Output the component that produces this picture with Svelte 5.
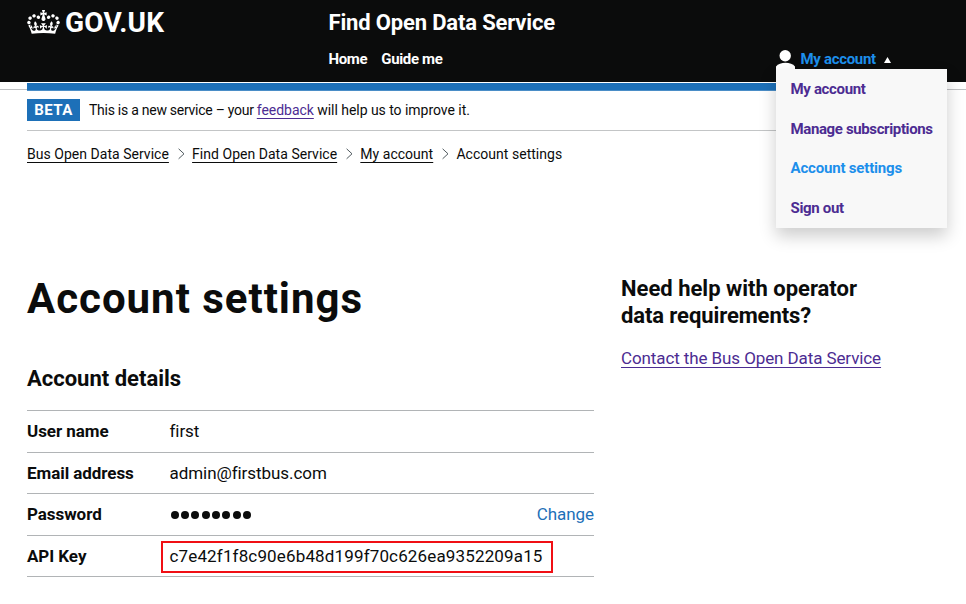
<script>
  const nav = ['Home', 'Guide me'];
  const menu = [
    { label: 'My account', ls: -0.33 },
    { label: 'Manage subscriptions', ls: -0.37 },
    { label: 'Account settings', ls: -0.18, current: true },
    { label: 'Sign out', ls: -0.33 }
  ];
  const breadcrumbs = ['Bus Open Data Service', 'Find Open Data Service', 'My account'];
  const details = [
    { term: 'User name', value: 'first' },
    { term: 'Email address', value: 'admin@firstbus.com' },
    { term: 'Password', password: true, action: 'Change' },
    { term: 'API Key', value: 'c7e42f1f8c90e6b48d199f70c626ea9352209a15', key: true }
  ];
</script>

<div class="page">
  <header>
    <a class="logo" href="#home">
      <svg viewBox="0 0 132 97" width="33" height="24" fill="#fff" fill-rule="evenodd" aria-hidden="true">
        <path d="M25 30.2c3.5 1.5 7.7-.2 9.1-3.7 1.5-3.6-.2-7.8-3.9-9.2-3.6-1.4-7.6.3-9.1 3.9-1.4 3.5.3 7.5 3.9 9zM9 39.5c3.6 1.5 7.8-.2 9.2-3.7 1.5-3.6-.2-7.8-3.9-9.1-3.6-1.5-7.6.2-9.1 3.8-1.4 3.5.3 7.5 3.8 9zM4.4 57.2c3.5 1.5 7.7-.2 9.1-3.8 1.5-3.6-.2-7.7-3.9-9.1-3.5-1.5-7.6.3-9.1 3.8-1.4 3.5.3 7.6 3.9 9.1zm38.3-21.4c3.5 1.5 7.7-.2 9.1-3.8 1.5-3.6-.2-7.7-3.9-9.1-3.6-1.5-7.6.3-9.1 3.8-1.3 3.6.4 7.7 3.9 9.1zm64.4-5.6c-3.6 1.5-7.8-.2-9.1-3.7-1.5-3.6.2-7.8 3.8-9.2 3.6-1.4 7.7.3 9.2 3.9 1.3 3.5-.4 7.5-3.9 9zm15.9 9.3c-3.6 1.5-7.7-.2-9.1-3.7-1.5-3.6.2-7.8 3.7-9.1 3.6-1.5 7.7.2 9.2 3.8 1.5 3.5-.3 7.5-3.8 9zm4.7 17.7c-3.6 1.5-7.8-.2-9.2-3.8-1.5-3.6.2-7.7 3.9-9.1 3.6-1.5 7.7.3 9.2 3.8 1.3 3.5-.4 7.6-3.9 9.1zM89.3 35.8c-3.6 1.5-7.8-.2-9.2-3.8-1.4-3.6.2-7.7 3.9-9.1 3.6-1.5 7.7.3 9.2 3.8 1.4 3.6-.3 7.7-3.9 9.1zM69.7 17.7l8.9 4.7V9.3l-8.9 2.8c-.2-.3-.5-.6-.9-.9L72.4 0H59.6l3.5 11.2c-.3.3-.6.5-.9.9l-8.8-2.8v13.1l8.8-4.7c.3.3.6.7.9.9l-5 15.4v.1c-.2.8-.4 1.6-.4 2.4 0 4.1 3.1 7.5 7 8.1h.2c.3 0 .7.1 1 .1.4 0 .7 0 1-.1h.2c4-.6 7.1-4.1 7.1-8.1 0-.8-.1-1.7-.4-2.4V34l-5.1-15.4c.4-.2.7-.6 1-.9zM66 92.8c16.9 0 32.8 1.1 47.1 3.2 4-16.9 8.9-26.7 14-33.5l-9.6-3.4c1 4.9 1.1 7.2 0 10.2-1.5-1.4-3-4.3-4.2-8.7L108.6 76c2.8-2 5-3.2 7.5-3.3-4.4 9.4-10 11.9-13.6 11.2-4.3-.8-6.3-4.6-5.6-7.9 1-4.7 5.7-5.9 8-.5 4.3-8.7-3-11.4-7.6-8.8 7.1-7.2 7.9-13.5 2.1-21.1-8 6.1-8.1 12.3-4.5 20.8-4.7-5.4-12.1-2.5-9.5 6.2 3.4-5.2 7.9-2 7.2 3.1-.6 4.3-6.4 7.8-13.5 7.2-10.3-.9-10.9-8-11.2-13.8 2.5-.5 7.1 1.8 11 7.3L80.2 60c-4.1 4.4-8 5.3-12.3 5.4 1.4-4.4 8-11.6 8-11.6H55.5s6.4 7.2 7.9 11.6c-4.2-.1-8-1-12.3-5.4l1.4 16.4c3.9-5.5 8.5-7.7 10.9-7.3-.3 5.8-.9 12.8-11.1 13.8-7.2.6-12.9-2.9-13.5-7.2-.7-5 3.8-8.3 7.1-3.1 2.7-8.7-4.6-11.6-9.4-6.2 3.7-8.5 3.6-14.7-4.6-20.8-5.8 7.6-5 13.9 2.2 21.1-4.7-2.6-11.9.1-7.7 8.8 2.3-5.5 7.1-4.2 8.1.5.7 3.3-1.3 7.1-5.7 7.9-3.5.7-9-1.8-13.5-11.2 2.5.1 4.7 1.3 7.5 3.3l-4.7-15.4c-1.2 4.4-2.7 7.2-4.3 8.7-1.1-3-.9-5.3 0-10.2l-9.5 3.4c5 6.9 9.9 16.7 14 33.5 14.8-2.1 30.8-3.2 47.7-3.2z" />
      </svg>
      <span>GOV.UK</span>
    </a>
    <div class="service">
      <div class="service-name">Find Open Data Service</div>
      <nav>
        {#each nav as item}<a href="#nav">{item}</a>{/each}
        <div class="account">
          <svg width="19" height="20" viewBox="0 0 19 20" fill="#fff" aria-hidden="true">
            <circle cx="9.2" cy="5.8" r="5.7" />
            <path d="M0 20v-3.500C2 14 5.500 12.800 9.500 12.800s7.500 1.200 9.500 3.700V20z" />
          </svg>
          <a class="active" href="#account">My account</a>
          <svg class="caret" width="7" height="6" viewBox="0 0 7 6" fill="#fff" aria-hidden="true"><path d="M3.500 0L7 6H0z" /></svg>
          <ul class="menu">
            {#each menu as item}
              <li><a href="#menu" class:current={item.current} style="letter-spacing: {item.ls}px">{item.label}</a></li>
            {/each}
          </ul>
        </div>
      </nav>
    </div>
  </header>
  <div class="strip"><div></div></div>

  <div class="container">
    <div class="phase">
      <strong>BETA</strong>
      <p><span>This is a new service – your</span><a href="#feedback">feedback</a> will help us to improve it.</p>
    </div>
    <div class="crumbs">
      {#each breadcrumbs as crumb}
        <a href="#crumb">{crumb}</a>
        <svg width="7" height="12" viewBox="0 0 7 12" fill="none" stroke="#505a5f" stroke-width="1" aria-hidden="true"><path d="M.6.8L6 5.800.6 10.800" /></svg>
      {/each}
      <span>Account settings</span>
    </div>
    <main>
      <section>
        <h1>Account settings</h1>
        <h2>Account details</h2>
        <dl>
          {#each details as row}
            <div class="row">
              <dt>{row.term}</dt>
              <dd>
                {#if row.password}
                  <span class="dots">{#each Array(8) as _}<i></i>{/each}</span>
                {:else}
                  <span class:key={row.key}>{row.value}</span>
                {/if}
              </dd>
              {#if row.action}<a href="#change">{row.action}</a>{/if}
            </div>
          {/each}
        </dl>
      </section>
      <aside>
        <h2>Need help with operator<br /><span>data requirements?</span></h2>
        <a href="#contact">Contact the Bus Open Data Service</a>
      </aside>
    </main>
  </div>
</div>

<style>
  .page {
    height: 604px;
    overflow: hidden;
    background: #fff;
    color: #0b0c0c;
    font-family: Roboto, sans-serif;
  }
  h1, h2, p, dl, dd, ul { margin: 0; padding: 0; }
  a { text-decoration: none; }
  header {
    display: flex;
    height: 82px;
    padding-left: 27px;
    background: #0b0c0c;
    color: #fff;
  }
  header a { color: #fff; }
  .logo {
    display: flex;
    align-items: flex-start;
    width: 301.5px;
    padding-top: 10px;
    box-sizing: border-box;
    gap: 5px;
  }
  .logo span {
    font-size: 28px;
    font-weight: 700;
    line-height: 26px;
    letter-spacing: 0.25px;
  }
  .service { flex: 1; }
  .service-name {
    height: 45px;
    font-size: 22px;
    font-weight: 700;
    line-height: 45px;
    letter-spacing: -0.16px;
  }
  nav {
    display: flex;
    gap: 14px;
    font-size: 15px;
    font-weight: 700;
    line-height: 28px;
    letter-spacing: -0.35px;
  }
  .account {
    position: relative;
    display: flex;
    align-items: flex-start;
    margin-left: auto;
    width: 190px;
  }
  .account > svg { margin: 5px 5.500px 0 0; }
  .account .active { color: #1d8feb; letter-spacing: -0.32px; }
  .account > .caret { margin: 12px 0 0 8px; }
  .menu {
    position: absolute;
    z-index: 2;
    top: 24px;
    left: 0;
    width: 171px;
    height: 159px;
    list-style: none;
    background: #f8f8f8;
    box-shadow: 0 8px 16px rgba(0, 0, 0, 0.2);
  }
  .menu li { height: 39.6px; padding-left: 14.5px; line-height: 41px; }
  .menu a { color: #4c2c92; }
  .menu .current { color: #1d8feb; }
  .strip {
    height: 9px;
    padding: 1px 27px 0;
    box-sizing: border-box;
    margin-bottom: 8px;
    background: linear-gradient(#bfc1c3, #bfc1c3) 0 7px / 100% 1px no-repeat;
  }
  .strip div { height: 8px; background: linear-gradient(#1d70b8 7px, #4a8dc7 7px); }
  .container { padding: 0 27px; }
  .phase {
    display: flex;
    height: 31px;
    border-bottom: 1px solid #c3c5c6;
    font-size: 14px;
    line-height: 22px;
  }
  .phase strong {
    width: 53px;
    height: 22px;
    margin-right: 9px;
    background: #1d70b8;
    color: #fff;
    font-size: 15px;
    line-height: 23px;
    letter-spacing: 0.5px;
    text-align: center;
  }
  .phase p { line-height: 23px; letter-spacing: -0.04px; }
  .phase p span { margin-right: 3px; letter-spacing: -0.26px; }
  .phase a, aside a { color: #4c2c92; text-decoration: underline; text-decoration-thickness: 1px; text-underline-offset: 3px; text-decoration-skip-ink: none; }
  .crumbs {
    display: flex;
    align-items: center;
    height: 20px;
    margin-top: 13px;
    font-size: 14px;
    line-height: 20px;
    letter-spacing: 0.03px;
  }
  .crumbs a { color: #0b0c0c; text-decoration: underline; text-decoration-thickness: 1px; text-underline-offset: 3px; text-decoration-skip-ink: none; }
  .crumbs svg { margin: 0 7.500px 0 8.700px; }
  main {
    display: flex;
    gap: 27px;
    margin-top: 109px;
  }
  section { width: 567px; }
  h1 {
    height: 50px;
    font-size: 42px;
    line-height: 51px;
    letter-spacing: 0.98px;
  }
  h2 { font-size: 22px; line-height: 27px; }
  section h2 { margin: 42px 0 18px; letter-spacing: 0; }
  dl { border-top: 1px solid #b1b4b6; }
  .row {
    display: flex;
    height: 41.5px;
    box-sizing: border-box;
    border-bottom: 1px solid #b1b4b6;
    font-size: 17px;
    line-height: 41px;
    letter-spacing: -0.06px;
  }
  dt { width: 142.5px; font-weight: 700; }
  dd { flex: 1; }
  .row a { color: #1d70b8; }
  .dots { display: flex; align-items: center; height: 42px; gap: 2.400px; padding-left: 1px; }
  .dots i { width: 8px; height: 8px; border-radius: 50%; background: #0b0c0c; }
  .key {
    display: block;
    width: 388px;
    box-sizing: border-box;
    width: 392px;
    height: 32px;
    margin: 5px 0 0 -8.500px;
    padding: 0 0 0 6.500px;
    border: 2px solid #f00f14;
    line-height: 27px;
    letter-spacing: 0.15px;
  }
  aside { padding-top: 2px; }
  aside h2 span { letter-spacing: -0.1px; }
  aside a { display: block; margin-top: 17px; font-size: 17px; line-height: 24px; letter-spacing: -0.1px; }
</style>
